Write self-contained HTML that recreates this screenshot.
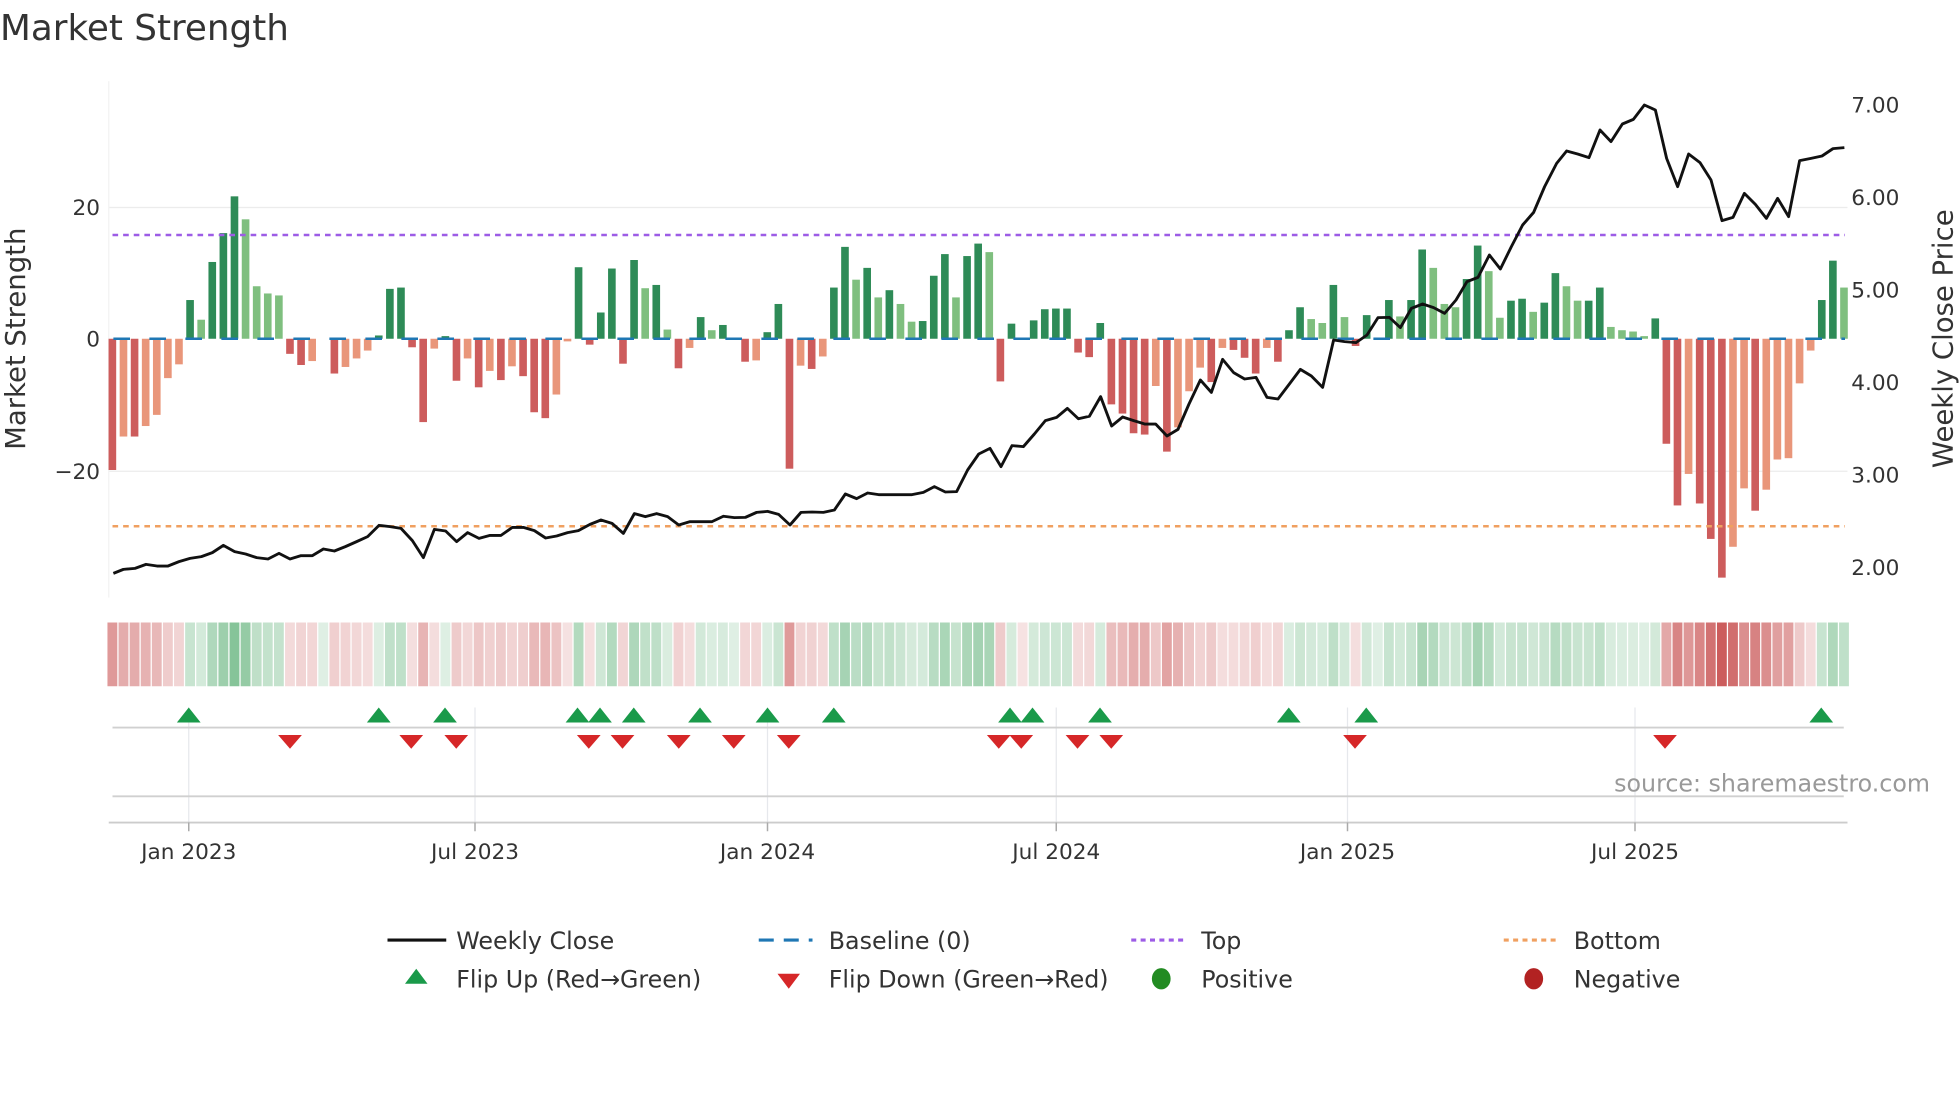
<!DOCTYPE html>
<html><head><meta charset="utf-8">
<style>
html,body{margin:0;padding:0;background:#fff;}
svg{display:block;font-family:"DejaVu Sans","Liberation Sans",sans-serif;}
</style></head>
<body>
<svg id="s" width="1960" height="1102" viewBox="0 0 1568 881.6" xmlns="http://www.w3.org/2000/svg">
<rect width="1568" height="881.6" fill="#fff"/>
<text x="0" y="32" font-size="28.6" fill="#333">Market Strength</text>
<line x1="87" y1="166" x2="1478" y2="166" stroke="#ececec" stroke-width="1"/>
<line x1="87" y1="377" x2="1478" y2="377" stroke="#ececec" stroke-width="1"/>
<line x1="87" y1="65" x2="87" y2="478" stroke="#f2f2f2" stroke-width="1"/>
<g id="bars"></g>
<line x1="90" y1="188" x2="1476" y2="188" stroke="#9d5ce6" stroke-width="2" stroke-dasharray="4.5 4"/>
<line x1="90" y1="421" x2="1476" y2="421" stroke="#f0a060" stroke-width="2" stroke-dasharray="4.5 4"/>
<polyline id="price" fill="none" stroke="#111" stroke-width="2.3" stroke-linejoin="round" points=""/>
<g font-size="17.3" fill="#333" text-anchor="end">
<text x="80" y="172">20</text>
<text x="80" y="277">0</text>
<text x="80" y="383">−20</text>
</g>
<g font-size="17.3" fill="#333">
<text x="1481" y="90">7.00</text>
<text x="1481" y="164">6.00</text>
<text x="1481" y="238">5.00</text>
<text x="1481" y="312">4.00</text>
<text x="1481" y="386">3.00</text>
<text x="1481" y="460">2.00</text>
</g>
<text transform="translate(20,271) rotate(-90)" font-size="22" fill="#333" text-anchor="middle">Market Strength</text>
<text transform="translate(1562,271) rotate(-90)" font-size="22" fill="#333" text-anchor="middle">Weekly Close Price</text>
<g id="heat"></g>
<g stroke="#e6e8ec" stroke-width="1">
<line x1="151" y1="566" x2="151" y2="658"/><line x1="380" y1="566" x2="380" y2="658"/>
<line x1="614" y1="566" x2="614" y2="658"/><line x1="845" y1="566" x2="845" y2="658"/>
<line x1="1078" y1="566" x2="1078" y2="658"/><line x1="1308" y1="566" x2="1308" y2="658"/>
</g>
<line x1="90" y1="582" x2="1475" y2="582" stroke="#d0d0d0" stroke-width="1.5"/>
<line x1="90" y1="637" x2="1475" y2="637" stroke="#d0d0d0" stroke-width="1.5"/>
<line x1="87" y1="658" x2="1478" y2="658" stroke="#ccc" stroke-width="1.5"/>
<g stroke="#aaa" stroke-width="1.2">
<line x1="151" y1="658" x2="151" y2="665"/><line x1="380" y1="658" x2="380" y2="665"/>
<line x1="614" y1="658" x2="614" y2="665"/><line x1="845" y1="658" x2="845" y2="665"/>
<line x1="1078" y1="658" x2="1078" y2="665"/><line x1="1308" y1="658" x2="1308" y2="665"/>
</g>
<g id="marks"></g>
<g font-size="17.3" fill="#333" text-anchor="middle">
<text x="151" y="687">Jan 2023</text><text x="380" y="687">Jul 2023</text>
<text x="614" y="687">Jan 2024</text><text x="845" y="687">Jul 2024</text>
<text x="1078" y="687">Jan 2025</text><text x="1308" y="687">Jul 2025</text>
</g>
<text x="1544" y="633" font-size="19" fill="#999" text-anchor="end">source: sharemaestro.com</text>
<g font-size="19" fill="#333">
<line x1="310" y1="752" x2="357" y2="752" stroke="#111" stroke-width="2.5"/>
<text x="365" y="759">Weekly Close</text>
<line x1="607" y1="752" x2="650" y2="752" stroke="#1f77b4" stroke-width="2.5" stroke-dasharray="12 8"/>
<text x="663" y="759">Baseline (0)</text>
<line x1="905" y1="752" x2="948" y2="752" stroke="#9d5ce6" stroke-width="2.5" stroke-dasharray="4 3.5"/>
<text x="961" y="759">Top</text>
<line x1="1203" y1="752" x2="1246" y2="752" stroke="#f0a060" stroke-width="2.5" stroke-dasharray="4 3.5"/>
<text x="1259" y="759">Bottom</text>
<polygon points="333,775 324,787 342,787" fill="#1a9a4a"/>
<text x="365" y="790">Flip Up (Red→Green)</text>
<polygon points="622,779 640,779 631,791" fill="#d62728"/>
<text x="663" y="790">Flip Down (Green→Red)</text>
<ellipse cx="929" cy="783" rx="7.5" ry="8.5" fill="#228b22"/>
<text x="961" y="790">Positive</text>
<ellipse cx="1227" cy="783" rx="7.5" ry="8.5" fill="#b22222"/>
<text x="1259" y="790">Negative</text>
</g>
</svg>
<script>
(function(){
var NS="http://www.w3.org/2000/svg";
var data="-20d,-14.9l,-14.9d,-13.3l,-11.6l,-6l,-3.9l,5.9d,2.9l,11.7d,16.1d,21.7d,18.2l,8l,6.9l,6.6l,-2.3d,-4d,-3.4l,0d,-5.3d,-4.3l,-3l,-1.8l,0.5d,7.6d,7.8d,-1.3d,-12.7d,-1.5l,0.4d,-6.4d,-3l,-7.4d,-4.9l,-6.3d,-4.2l,-5.7d,-11.2d,-12.1d,-8.5l,-0.4l,10.9d,-0.9d,4d,10.7d,-3.8d,12d,7.7l,8.2d,1.4l,-4.5d,-1.4l,3.3d,1.3l,2.1d,0d,-3.5d,-3.3l,1d,5.3d,-19.8d,-4.1l,-4.6d,-2.7l,7.8d,14d,9l,10.8d,6.3l,7.4d,5.3l,2.6l,2.7d,9.6d,12.9d,6.3l,12.6d,14.5d,13.2l,-6.5d,2.3d,-0.1l,2.8d,4.5d,4.6d,4.6d,-2.1d,-2.8d,2.4d,-10d,-11.4d,-14.4d,-14.6d,-7.2l,-17.2d,-13.5l,-8l,-4.4l,-6.6d,-1.4l,-1.7d,-2.9d,-5.3d,-1.4l,-3.5d,1.3d,4.8d,3l,2.4l,8.2d,3.3l,-1.1d,3.6d,0d,5.9d,3.4l,5.9d,13.6d,10.8l,5.3l,4.8l,9.1d,14.2d,10.3l,3.2l,5.8d,6.1d,4.1l,5.5d,10d,8l,5.8l,5.8d,7.8d,1.8l,1.3l,1.1l,0.4l,3.1d,-16d,-25.4d,-20.6l,-25.1d,-30.5d,-36.4d,-31.7l,-22.8l,-26.2d,-23l,-18.4l,-18.2l,-6.8l,-1.8l,5.9d,11.9d,7.8l".split(",");
var bars=document.getElementById("bars"),heat=document.getElementById("heat");
var Z=271,U=5.25,W=6.1,SP=8.88,X0=89.9;
function el(n,a,p){var e=document.createElementNS(NS,n);for(var k in a)e.setAttribute(k,a[k]);p.appendChild(e);return e;}
for(var i=0;i<data.length;i++){
 var s=data[i],sh=s.slice(-1),v=parseFloat(s.slice(0,-1));
 var x=X0+SP*i;
 if(v!==0){
  var c=v>0?(sh=="d"?"#2e8b57":"#7fbf7f"):(sh=="d"?"#cd5c5c":"#e9967a");
  var h=Math.abs(v)*U;
  el("rect",{x:x-W/2,y:v>0?Z-h:Z,width:W,height:h,fill:c},bars);
 }
 var t=Math.min(0.97,0.16+Math.abs(v)*0.021);
 var r,g,b;
 if(v>=0){r=255-(255-60)*t;g=255-(255-160)*t;b=255-(255-90)*t;}
 else{r=255-(255-200)*t;g=255-(255-80)*t;b=255-(255-80)*t;}
 el("rect",{x:x-SP/2+0.5,y:498,width:SP-1,height:51,fill:"rgb("+(r|0)+","+(g|0)+","+(b|0)+")"},heat);
}
el("line",{x1:90.7,y1:Z,x2:1476,y2:Z,stroke:"#1f77b4","stroke-width":2,"stroke-dasharray":"13.3 15.5"},bars);
var pts=[[90.7,458.7],[98.7,455.5],[108,454.7],[116.8,451.5],[125.6,452.8],[134.4,452.8],[143.2,449.3],[152,446.7],[161.1,445.3],[169.9,442.1],[178.7,436.3],[187.7,441.3],[196.5,443.2],[205.3,446.1],[214.4,447.2],[223.2,442.7],[232,447.2],[240.8,444.5],[249.9,444.5],[258.7,439.2],[267.5,440.8],[276.3,437.3],[285.3,433.3],[294.1,429.3],[303.2,420.3],[312,421.3],[320.8,422.7],[329.9,432.5],[338.7,446.1],[347.5,423.5],[356.5,424.8],[365.3,433.3],[374.1,426.1],[383.2,430.7],[392,428.3],[400.8,428.3],[409.9,421.9],[418.7,421.9],[427.5,424.5],[436.5,430.4],[445.3,428.8],[454.1,426.1],[462.7,424.5],[472,419.5],[480.8,416],[489.6,418.7],[498.7,426.7],[507.5,410.9],[516.3,413.3],[525.3,410.9],[534.1,413.3],[543,420],[552,417.3],[560.8,417.3],[569.6,417.3],[578.7,413],[587.5,414.1],[596.3,413.9],[605.3,409.9],[614.1,409.1],[622.9,411.5],[632,420],[640.8,409.9],[649.6,409.6],[658.7,409.9],[667.5,408],[676.3,395.2],[685.3,398.9],[694.1,394.4],[702.9,395.7],[712,395.7],[720.8,395.7],[729.6,395.7],[738.7,393.9],[747.5,389.3],[756.3,393.6],[765.3,393.3],[774.1,376],[783,363.2],[792,358.7],[800.8,373.3],[809.6,356.5],[818.7,357.3],[827.5,347.2],[836.3,336.5],[845.3,333.9],[853.9,326.7],[862.7,335],[871.5,333],[880.5,317.3],[889.3,340.8],[898.1,333.6],[906.9,336.5],[915.7,339.2],[924.5,339.2],[933.6,348.8],[942.4,343.5],[951.2,323.2],[960.3,304],[969.1,313.9],[978.1,287.5],[986.9,298.1],[995.7,303.2],[1004.8,301.9],[1013.6,317.9],[1022.4,319.2],[1031.5,307.2],[1040.3,295.5],[1049.1,300.8],[1058.1,309.9],[1066.9,272],[1075.7,273.3],[1084.8,274.1],[1093.6,268],[1102.4,254.1],[1111.5,253.9],[1120.3,262.1],[1129.1,246.7],[1138.1,243.2],[1146.9,246.1],[1155.7,250.7],[1164.8,240],[1173.6,225.3],[1182.4,221.9],[1191.5,204],[1200.3,215.2],[1209.1,197.3],[1218.1,180],[1226.9,169.9],[1235.7,149.3],[1245.3,130.7],[1253.3,120.8],[1262.1,123.2],[1271.2,126.1],[1280,104],[1288.8,113.3],[1297.9,99.2],[1306.7,95.5],[1315.5,84],[1324.3,88],[1333.3,126.7],[1342.1,149.3],[1350.9,123.2],[1360,130.1],[1368.8,144],[1377.6,176.5],[1386.4,173.9],[1395.5,154.7],[1404.3,163.5],[1413.1,174.7],[1422.1,158.7],[1430.9,173.3],[1439.7,128.5],[1448.8,126.7],[1457.6,124.8],[1466.4,118.9],[1475.5,118.1]];
document.getElementById("price").setAttribute("points",pts.map(function(p){return p.join(",");}).join(" "));
var marks=document.getElementById("marks");
var ups=[151,303,356,462,480,507,560,614,667,808,826,880,1031,1093,1457];
var dns=[232,329,365,471,498,543,587,631,799,817,862,889,1084,1332];
ups.forEach(function(x){el("polygon",{points:(x)+",566 "+(x-9.5)+",578 "+(x+9.5)+",578",fill:"#1a9a4a"},marks);});
dns.forEach(function(x){el("polygon",{points:(x-9.5)+",588 "+(x+9.5)+",588 "+x+",599",fill:"#d62728"},marks);});
})();
</script>
</body></html>
